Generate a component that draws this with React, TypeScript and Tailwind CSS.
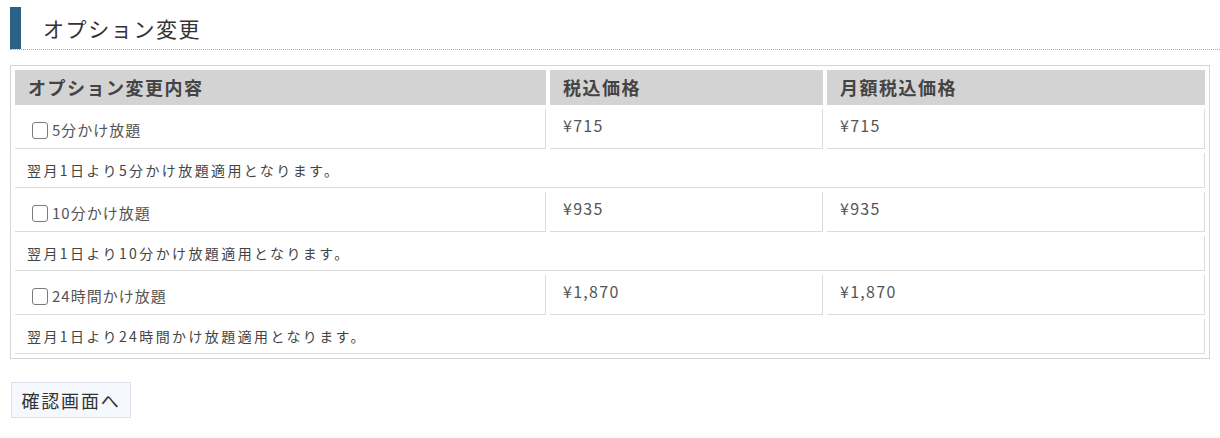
const options = [
  { label: "5分かけ放題", price: "¥715", monthly: "¥715", note: "翌月1日より5分かけ放題適用となります。" },
  { label: "10分かけ放題", price: "¥935", monthly: "¥935", note: "翌月1日より10分かけ放題適用となります。" },
  { label: "24時間かけ放題", price: "¥1,870", monthly: "¥1,870", note: "翌月1日より24時間かけ放題適用となります。" },
];

function Checkbox() {
  return <span className="mr-[4px] ml-[4px] inline-block h-[17px] w-[16px] shrink-0 rounded-[3px] border border-[#7a7a7a] bg-white" />;
}

export default function App() {
  return (
    <div
      className="min-h-[438px] bg-white text-[#333]"
      style={{ fontFamily: '"Noto Sans CJK JP", "Noto Sans", sans-serif' }}
    >
      <div className="pt-[7px] pl-[10px]">
        <div className="flex h-[43px] items-center border-b border-dotted border-[#8db3d2]">
          <span className="h-full w-[11px] bg-[#2a6186]" />
          <h2 className="pl-[22px] text-[21px] leading-none tracking-[1.6px] text-[#333]">オプション変更</h2>
        </div>
      </div>

      <div className="mt-[15px] ml-[10px] w-[1200px] border border-[#d4d4d4] p-[4px]">
        <div className="grid grid-cols-[531px_273px_378px] gap-[4px]">
          <div className="flex h-[35px] items-center bg-[#d3d3d3] pl-[13px] text-[18px] font-bold tracking-[1.5px] text-[#444]">
            オプション変更内容
          </div>
          <div className="flex h-[35px] items-center bg-[#d3d3d3] pl-[13px] text-[18px] font-bold tracking-[1.5px] text-[#444]">
            税込価格
          </div>
          <div className="flex h-[35px] items-center bg-[#d3d3d3] pl-[13px] text-[18px] font-bold tracking-[1.5px] text-[#444]">
            月額税込価格
          </div>

          {options.map((o) => (
            <div key={o.label} className="contents">
              <div className="flex h-[40px] items-center border-r border-b border-[#dcdcdc] pt-[3px] pl-[13px] text-[15px] tracking-[1px] text-[#555]">
                <Checkbox />
                {o.label}
              </div>
              <div className="h-[40px] border-r border-b border-[#dcdcdc] pt-[4px] pl-[13px] text-[16px] leading-6 tracking-[1.3px] text-[#555]">
                {o.price}
              </div>
              <div className="h-[40px] border-r border-b border-[#dcdcdc] pt-[4px] pl-[13px] text-[16px] leading-6 tracking-[1.3px] text-[#555]">
                {o.monthly}
              </div>
              <div className="col-span-3 flex h-[35px] items-center border-r border-b border-[#dcdcdc] pl-[12px] text-[14px] tracking-[2.4px] text-[#444]">
                {o.note}
              </div>
            </div>
          ))}
        </div>
      </div>

      <button className="mt-[23px] ml-[11px] h-[36px] w-[120px] border border-[#dde2ea] bg-[#f5f8fd] text-[18px] tracking-[1.8px] text-[#333]">
        確認画面へ
      </button>
    </div>
  );
}
